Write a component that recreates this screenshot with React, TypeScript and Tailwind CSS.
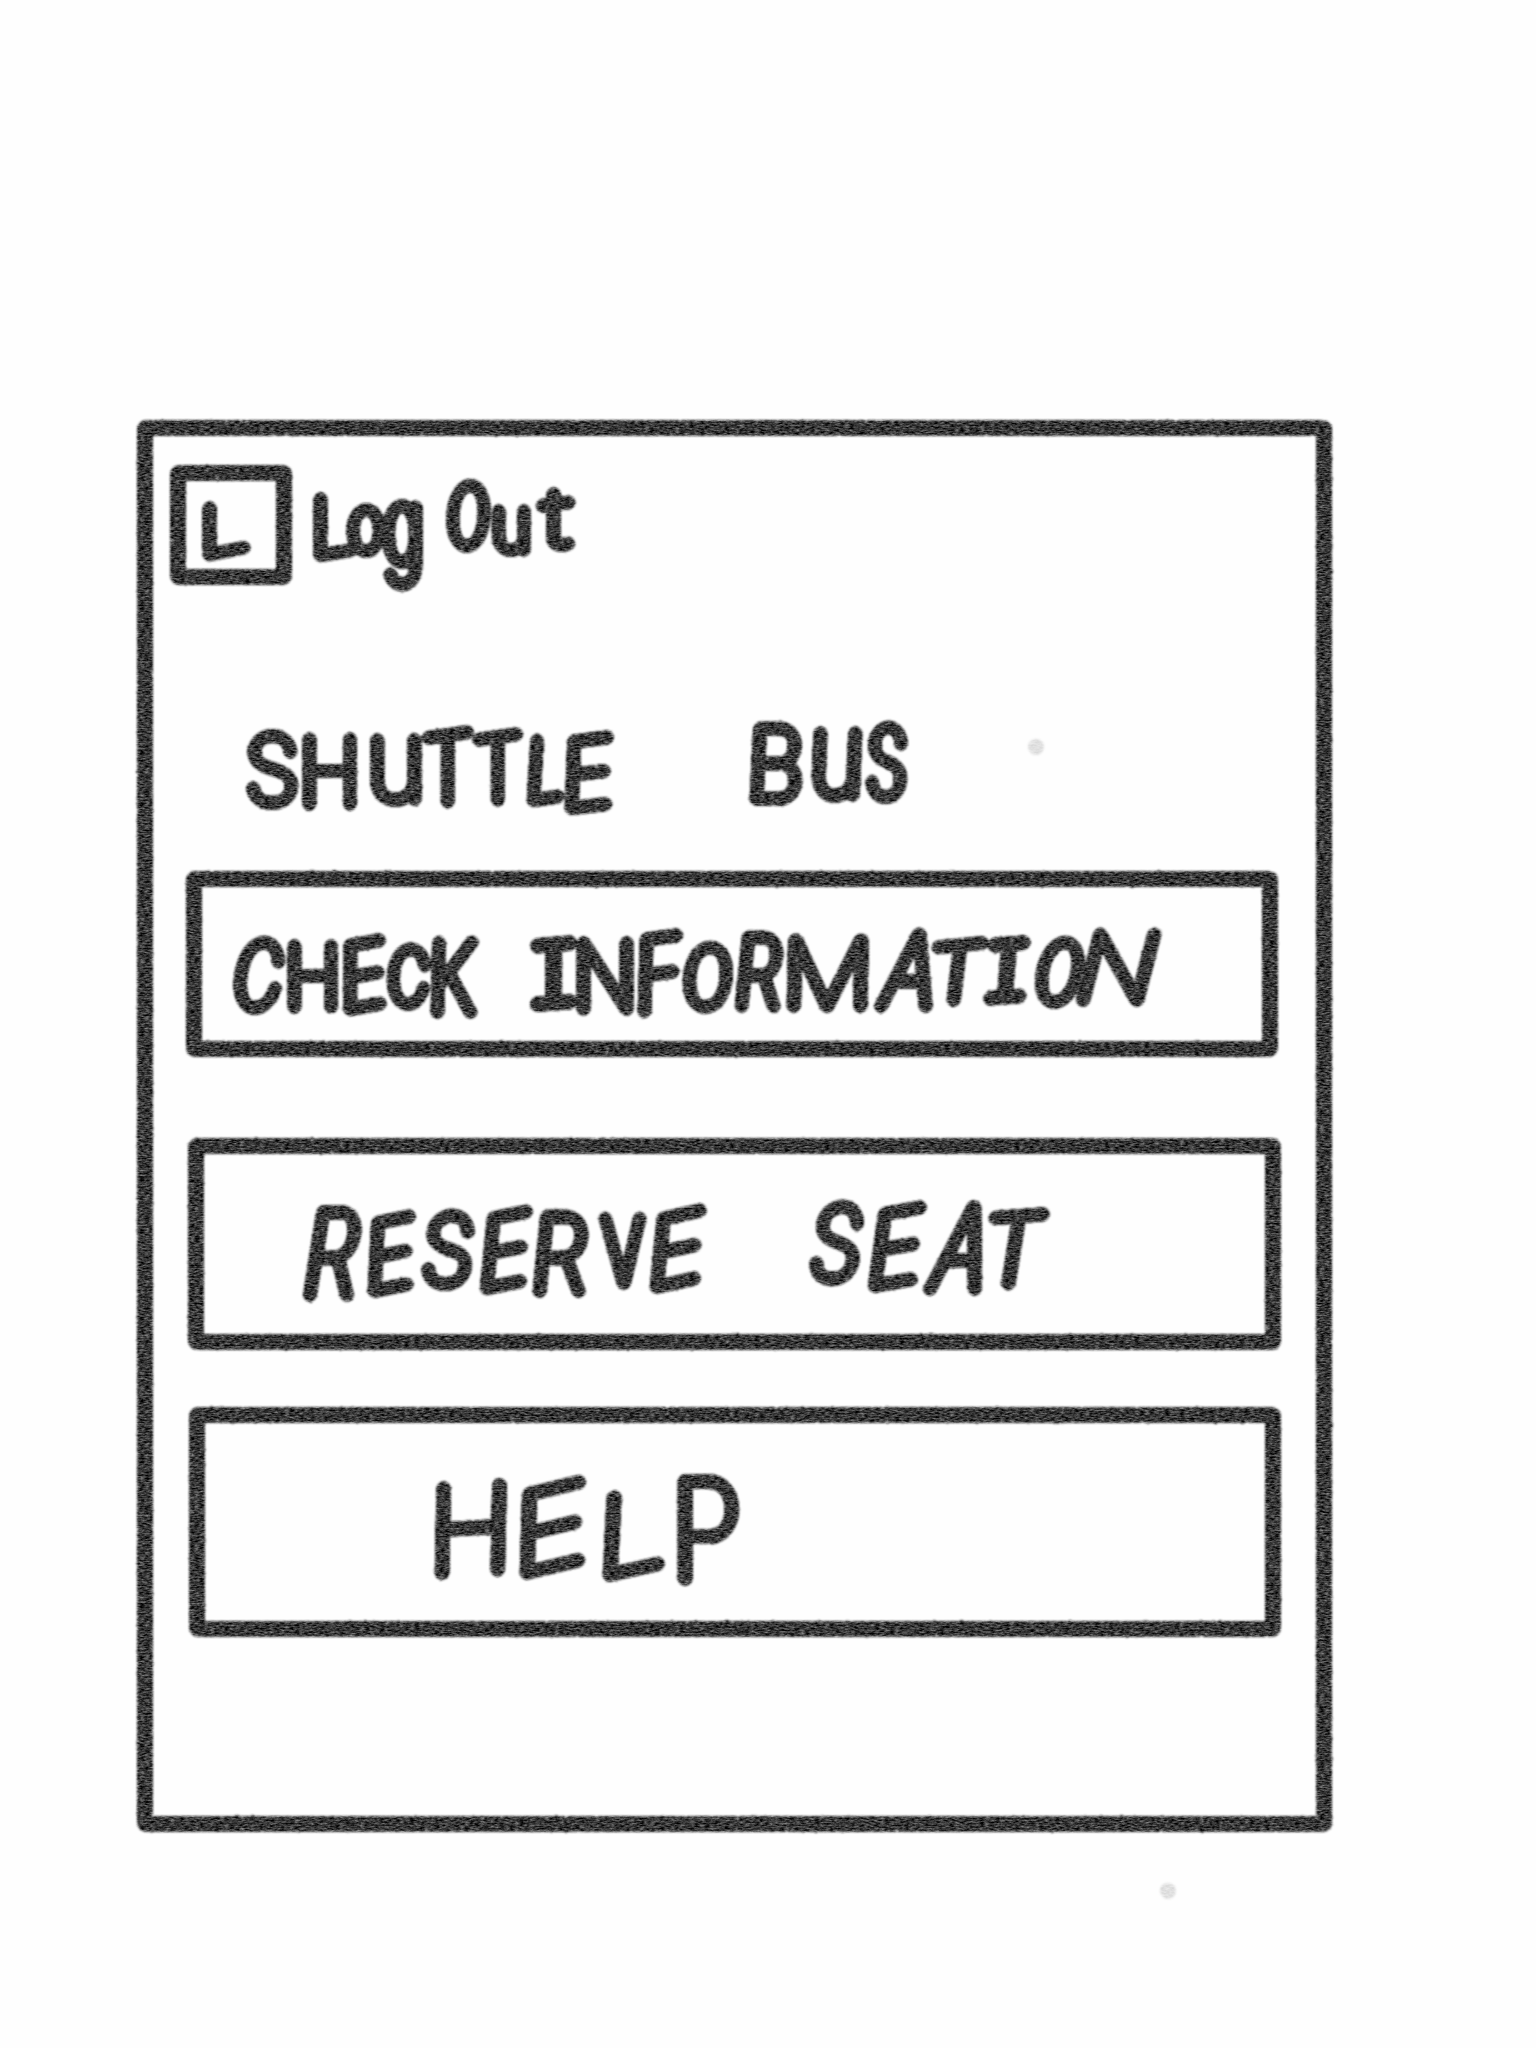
import React from "react";

// character, left, top, right, bottom (ink bounds), slant, lift, font family
type Letter = [string, number, number, number, number, number?, number?, string?];

const FONT_SIZE = 100;
const PEN = 6.3;

const measure = (() => {
  const ctx = document.createElement("canvas").getContext("2d")!;
  return (ch: string, font: string) => {
    ctx.font = `100 ${FONT_SIZE}px ${font}`;
    const m = ctx.measureText(ch);
    const baseline = FONT_SIZE / 2 + (m.fontBoundingBoxAscent - m.fontBoundingBoxDescent) / 2;
    return {
      left: -m.actualBoundingBoxLeft,
      top: baseline - m.actualBoundingBoxAscent,
      width: m.actualBoundingBoxLeft + m.actualBoundingBoxRight,
      height: m.actualBoundingBoxAscent + m.actualBoundingBoxDescent,
    };
  };
})();

function Glyph({ letter, gap, drop }: { letter: Letter; gap: number; drop: number }) {
  const [ch, x1, y1, x2, y2, slant = 0, lift = 0, font = "Inter"] = letter;
  const lower = ch === "U";
  const heavy = font !== "Inter";
  const pad = heavy ? PEN - 2 : PEN;
  const g = measure(lower ? "u" : ch, `"${font}", sans-serif`);
  const w = x2 - x1 - 2 * pad;
  const h = y2 - y1 - 2 * pad;
  // Top-wide letters hang from their bar, bottom-wide ones stand on their feet.
  const topWide = ch === "T" || ch === "V";
  const bottomWide = ch === "A" || ch === "L";
  const a = topWide || bottomWide ? w : (w - slant * h) / (1 - slant * lift);
  const b = h - lift * a;
  const sx = a / g.width;
  const sy = b / g.height;
  const m = [sx, -lift * sx, -slant * sy, sy];
  const tx = pad + (topWide ? 0 : slant * b) - (m[0] * g.left + m[2] * g.top);
  const ty = pad + lift * a - (m[1] * g.left + m[3] * g.top);
  return (
    <span
      className={
        heavy
          ? "block shrink-0 overflow-visible [filter:url(#thin)]"
          : "block shrink-0 overflow-visible"
      }
      style={{ width: x2 - x1, height: y2 - y1, marginLeft: gap, marginTop: drop }}
    >
      <span
        className={
          lower
            ? "block w-max origin-top-left text-[100px] leading-[100px] font-thin whitespace-pre lowercase"
            : "block w-max origin-top-left text-[100px] leading-[100px] font-thin whitespace-pre"
        }
        style={{ fontFamily: `"${font}", sans-serif`, transform: `matrix(${m.join(",")},${tx},${ty})` }}
      >
        {ch}
      </span>
    </span>
  );
}

function Lettering({ words, className }: { words: Letter[][]; className: string }) {
  const all = words.flat();
  const top = Math.min(...all.map((l) => l[2]));
  let pen = all[0][1];
  return (
    <div className={`flex shrink-0 items-start self-start [filter:url(#marker)] ${className}`}>
      {words.map((word, i) => (
        <React.Fragment key={i}>
          {i > 0 && <span className="w-0 whitespace-pre"> </span>}
          {word.map((l, j) => {
            const gap = l[1] - pen;
            pen = l[3];
            return <Glyph key={j} letter={l} gap={gap} drop={l[2] - top} />;
          })}
        </React.Fragment>
      ))}
    </div>
  );
}

const badge: Letter[][] = [[["L", 202, 494, 251, 562, 0, 0.2]]];

const logOut: Letter[][] = [
  [
    ["L", 313, 487, 358, 563, 0, 0.16],
    ["o", 346, 502, 387, 559],
    ["g", 381, 499, 423, 593],
  ],
  [
    ["O", 444, 479, 493, 554, 0.06],
    ["u", 491, 503, 531, 558],
    ["t", 535, 485, 577, 556, 0, 0.12],
  ],
];

const title: Letter[][] = [
  [
    ["S", 245, 729, 299, 811],
    ["H", 302, 732, 358, 812],
    ["U", 369, 733, 422, 808],
    ["T", 421, 725, 475, 812, 0, 0.14],
    ["T", 472, 727, 524, 810, 0, 0.14],
    ["L", 526, 730, 565, 808, 0.06, 0.14],
    ["E", 564, 730, 616, 816, 0.04, 0.12],
  ],
  [
    ["B", 749, 722, 806, 807, 0.05],
    ["U", 810, 726, 863, 804, 0.04],
    ["S", 864, 721, 910, 805, 0.04],
  ],
];

const check: Letter[][] = [
  [
    ["C", 229, 936, 289, 1016, 0.14],
    ["H", 287, 939, 339, 1015],
    ["E", 343, 933, 388, 1017, 0, 0.18],
    ["C", 385, 942, 433, 1011, 0.05],
    ["K", 430, 936, 480, 1020, 0.02],
  ],
  [
    ["I", 529, 935, 578, 1013, 0, 0.08, "Liberation Mono"],
    ["N", 576, 936, 634, 1017],
    ["F", 637, 928, 684, 1019, 0.03, 0.14],
    ["O", 680, 941, 736, 1015, 0.08],
    ["R", 734, 931, 788, 1014, 0.1],
    ["M", 786, 934, 870, 1014, 0.02],
    ["A", 873, 928, 933, 1014, 0.22],
    ["T", 931, 936, 990, 1010, 0.12, 0.1],
    ["I", 982, 935, 1032, 1007, 0.08, 0.08, "Liberation Mono"],
    ["O", 1030, 936, 1090, 1010, 0.18],
    ["N", 1075, 928, 1162, 1008, 0.26],
  ],
];

const reserve: Letter[][] = [
  [
    ["R", 302, 1205, 368, 1303, 0.16],
    ["E", 367, 1209, 418, 1299, 0.05, 0.2],
    ["S", 419, 1209, 478, 1292, 0.1],
    ["E", 479, 1204, 535, 1296, 0.1, 0.2],
    ["R", 532, 1210, 594, 1299, 0.1],
    ["V", 598, 1212, 647, 1291, -0.02],
    ["E", 649, 1203, 709, 1295, 0.1, 0.22],
  ],
  [
    ["S", 806, 1200, 868, 1287, 0.14],
    ["E", 867, 1200, 929, 1294, 0.14, 0.18],
    ["A", 922, 1200, 982, 1297, 0.26],
    ["T", 988, 1207, 1051, 1293, 0.16, 0.08],
  ],
];

const help: Letter[][] = [
  [
    ["H", 434, 1478, 508, 1581, 0.02, 0.06],
    ["E", 519, 1474, 589, 1581, 0.03, 0.24],
    ["L", 602, 1480, 665, 1583, 0.05, 0.22],
    ["P", 677, 1474, 740, 1587],
  ],
];

// Round pen nib used to thicken the thin glyphs.
const SIZE = 13;
const nib = Array.from({ length: SIZE * SIZE }, (_, i) => {
  const dx = (i % SIZE) - 6;
  const dy = Math.floor(i / SIZE) - 6;
  return dx * dx + dy * dy <= 38 ? 1 : 0;
}).join(" ");

function Filters() {
  return (
    <svg className="absolute h-0 w-0" aria-hidden="true">
      <filter id="thin" x="-30%" y="-30%" width="160%" height="160%">
        <feMorphology operator="erode" radius="2" />
      </filter>
      <filter id="marker" x="-30%" y="-30%" width="160%" height="160%" colorInterpolationFilters="sRGB">
        <feConvolveMatrix order="13" kernelMatrix={nib} divisor="1" edgeMode="none" />
      </filter>
      <filter id="grain" x="0" y="0" width="100%" height="100%" colorInterpolationFilters="sRGB">
        <feTurbulence type="fractalNoise" baseFrequency="0.2 0.6" numOctaves="3" seed="4" result="n" />
        <feColorMatrix
          in="n"
          type="matrix"
          values="0 0 0 0.8 -0.18  0 0 0 0.8 -0.18  0 0 0 0.8 -0.18  0 0 0 0 1"
          result="tone"
        />
        <feDisplacementMap in="SourceAlpha" in2="n" scale="2" xChannelSelector="R" yChannelSelector="G" result="d" />
        <feGaussianBlur in="d" stdDeviation="0.9" result="soft" />
        <feComposite in="tone" in2="soft" operator="in" />
      </filter>
    </svg>
  );
}

export default function App() {
  return (
    <div className="h-[2048px] w-[1536px] overflow-hidden bg-[#fefefe]">
      <Filters />
      <div className="flex h-full w-full flex-col items-start pt-[420px] [filter:url(#grain)]">
        <main className="ml-[137px] flex h-[1412px] w-[1195px] shrink-0 flex-col items-start rounded-[9px] border-[16px] border-neutral-800">
          <header className="mt-[29px] ml-[17px] flex h-[120px] shrink-0 items-start">
            <div className="flex h-[120px] w-[122px] rounded-[9px] border-[16px] border-neutral-800">
              <Lettering words={badge} className="mt-[13px] ml-[16px]" />
            </div>
            <Lettering words={logOut} className="mt-[14px] ml-[21px]" />
          </header>
          <div className="mt-[136px] ml-[92px] flex h-[95px] shrink-0 items-start">
            <Lettering words={title} className="" />
            <span className="mt-[18px] ml-[118px] h-4 w-4 rounded-full bg-neutral-800/15" />
          </div>
          <button className="mt-[55px] ml-[33px] flex h-[186px] w-[1092px] shrink-0 rounded-[9px] border-[16px] border-neutral-800">
            <Lettering words={check} className="mt-[41px] ml-[27px]" />
          </button>
          <button className="mt-[81px] ml-[35px] flex h-[212px] w-[1093px] shrink-0 rounded-[9px] border-[16px] border-neutral-800">
            <Lettering words={reserve} className="mt-[46px] ml-[98px]" />
          </button>
          <button className="mt-[57px] ml-[36px] flex h-[230px] w-[1092px] shrink-0 rounded-[9px] border-[16px] border-neutral-800">
            <Lettering words={help} className="mt-[51px] ml-[229px]" />
          </button>
        </main>
        <span className="mt-[51px] ml-[1160px] h-4 w-4 shrink-0 rounded-full bg-neutral-800/15" />
      </div>
    </div>
  );
}
